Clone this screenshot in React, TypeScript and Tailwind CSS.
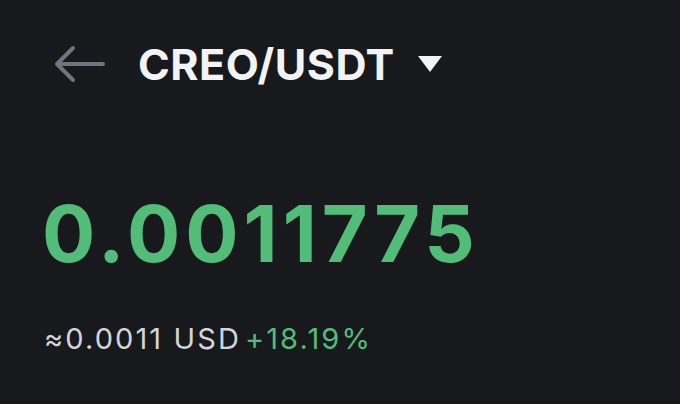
import React from "react";

export default function App() {
  return (
    <div className="w-[680px] h-[404px] bg-[#18191d] overflow-hidden" style={{ fontFamily: "Inter, 'Noto Sans', sans-serif" }}>
      <div className="flex items-center h-[64px] mt-[32px] pl-[52px]">
        <svg width="54" height="40" viewBox="0 0 54 40" fill="none">
          <path d="M51 20H5M21 4L5 20l16 16" stroke="#6f747e" strokeWidth="4" strokeLinecap="round" strokeLinejoin="round" />
        </svg>
        <span className="ml-[32px] text-[43px] font-bold text-[#f2f3f5] tracking-[0.5px] leading-none">CREO/USDT</span>
        <svg className="ml-[22px]" width="26" height="18" viewBox="0 0 26 18">
          <path d="M1 1h24L13 17z" fill="#f2f3f5" />
        </svg>
      </div>
      <div className="pl-[42px] mt-[98px] text-[79px] font-bold text-[#52bd78] leading-none tracking-[5px]">0.0011775</div>
      <div className="pl-[44px] mt-[51px] flex items-baseline text-[29px] leading-none tracking-[2.1px]">
        <span className="text-[#d3d5d9]">≈0.0011 USD</span>
        <span className="ml-[4px] text-[#52bd78]">+18.19%</span>
      </div>
    </div>
  );
}
